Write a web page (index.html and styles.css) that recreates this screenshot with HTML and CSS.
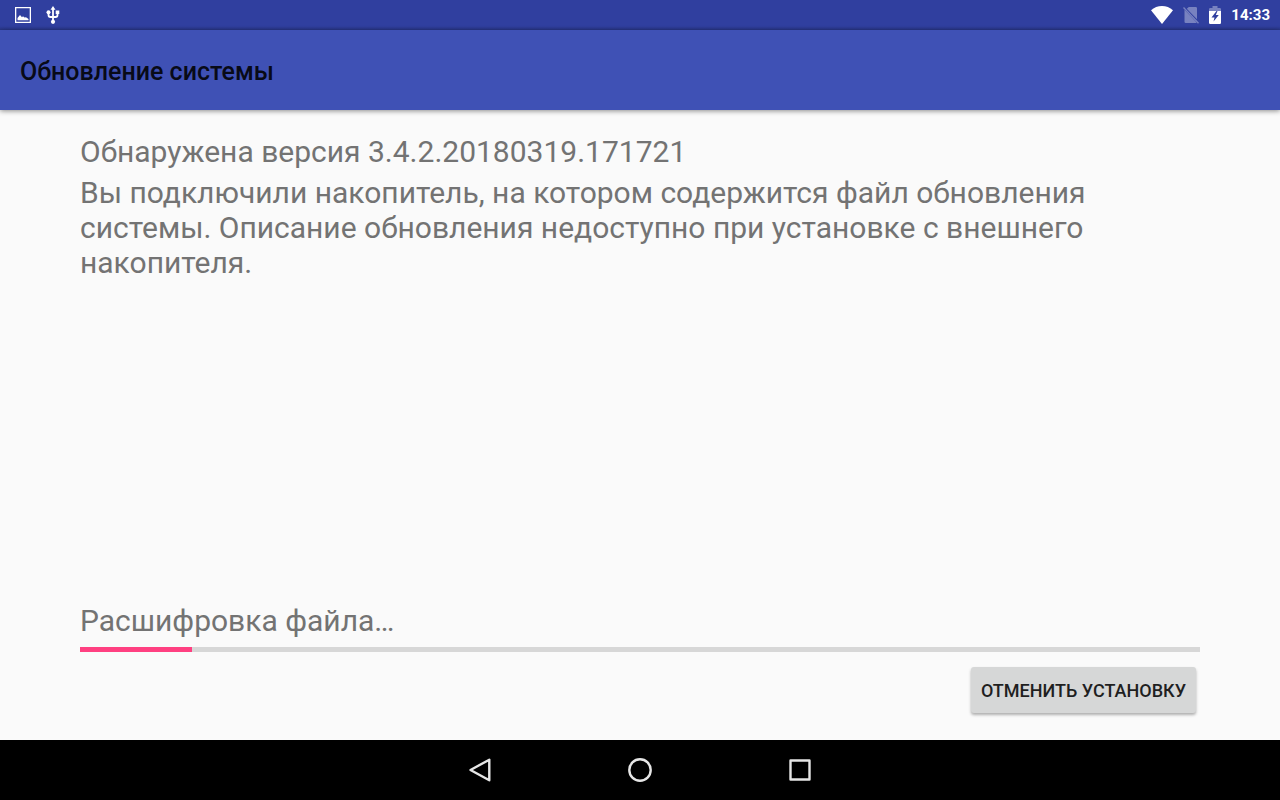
FILE: index.html
```html
<!DOCTYPE html>
<html lang="ru">
<head>
  <meta charset="UTF-8" />
  <meta name="viewport" content="width=device-width, initial-scale=1.0"/>
  <title>Обновление системы</title>
  <link rel="stylesheet" href="styles.css">
</head>
<body>
  <div class="status-bar">
    <div class="notifications">
      <!-- Screenshot -->
      <svg width="16" height="16" viewBox="0 0 16 16" fill="#fff">
        <path fill-rule="evenodd" d="M0 0H16V16H0ZM1.3 1.3V14.7H14.7V1.3Z"/>
        <path d="M2.5 13.3V11L5 8L7 10.3L8 9.3L9.5 10.5L11 10.2L13.5 12V13.3Z"/>
      </svg>
      <!-- USB -->
      <svg width="14" height="18" viewBox="0 0 14 18" fill="none" stroke="#fff" stroke-width="1.8">
        <path d="M7 3V15M2.5 6.5V9Q2.5 11 4.5 11H9.5Q11.5 11 11.5 9V6.500"/>
        <path d="M7 0L9.5 3.7H4.5ZM9.7 4.5H13.3V8H9.7Z" fill="#fff" stroke="none"/>
        <circle cx="2.5" cy="6.2" r="2" fill="#fff" stroke="none"/>
        <circle cx="7" cy="15.8" r="2.1" fill="#fff" stroke="none"/>
      </svg>
    </div>
    <div class="indicators">
      <svg width="22" height="18" viewBox="0 0 22 18" fill="#fff">
        <path d="M11 18L0 4.2C3 1.500 7 0 11 0S19 1.5 22 4.2Z"/>
      </svg>
      <!-- No SIM -->
      <svg class="no-sim" width="16" height="18" viewBox="0 0 16 18">
        <path d="M5.800 1H12.7Q14 1 14 2.3V13.300L3.800 2.800ZM1.500 3.800L13.700 16.600Q13.400 17 12.700 17H2.800Q1.500 17 1.500 15.700Z" fill="#fff"/>
        <path d="M0.500 1.500L15.500 17.300" stroke="#fff" stroke-width="1.300"/>
      </svg>
      <svg width="12" height="18" viewBox="0 0 12 18">
        <path d="M0 5V3.200Q0 2 1.2 2H3.5V0H8.5V2H10.800Q12 2 12 3.200V5Z" fill="#fff" opacity=".35"/>
        <path fill-rule="evenodd" d="M0 5H7.5L2.5 11.5H5.500L4.500 15.500L9.800 9H6.800L8.500 5H12V16.800Q12 18 10.800 18H1.2Q0 18 0 16.800Z" fill="#fff"/>
      </svg>
      <span class="clock">14:33</span>
    </div>
  </div>

  <header class="app-bar">
    <h1>Обновление системы</h1>
  </header>

  <main class="content">
    <p class="version">Обнаружена версия 3.4.2.20180319.171721</p>
    <p class="description">Вы подключили накопитель, на котором содержится файл обновления системы. Описание обновления недоступно при установке с внешнего накопителя.</p>

    <div class="install">
      <label for="install-progress">Расшифровка файла…</label>
      <progress id="install-progress" value="10" max="100"></progress>
      <button type="button" class="cancel">Отменить установку</button>
    </div>
  </main>

  <nav class="nav-bar">
    <button type="button" aria-label="Назад">
      <svg width="24" height="24" viewBox="0 0 24 24"><path d="M21.3 1.700V22.300L2.500 12Z"/></svg>
    </button>
    <button type="button" aria-label="Домой">
      <svg width="24" height="24" viewBox="0 0 24 24"><circle cx="12" cy="12" r="10.700"/></svg>
    </button>
    <button type="button" aria-label="Недавние">
      <svg width="24" height="24" viewBox="0 0 24 24"><rect x="2.5" y="2.5" width="19" height="19"/></svg>
    </button>
  </nav>
</body>
</html>
```
FILE: styles.css
```css
* {
  box-sizing: border-box;
}
body {
  margin: 0;
  min-height: 100vh;
  display: flex;
  flex-direction: column;
  font-family: Roboto, "Noto Sans", sans-serif;
  background-color: #fafafa;
  color: #737373;
}
h1, p {
  margin: 0;
}
svg {
  display: block;
}

/* Status bar */
.status-bar {
  display: flex;
  justify-content: space-between;
  height: 30px;
  padding: 0 10px 0 15px;
  background: linear-gradient(#303f9f 26px, #293789);
  color: #fff;
}
.notifications, .indicators {
  display: flex;
  align-items: center;
}
.notifications {
  gap: 15px;
}
.indicators {
  gap: 10px;
}
.no-sim {
  opacity: .35;
}
.clock {
  font-size: 15px;
  font-weight: 700;
}

/* Title */
.app-bar {
  display: flex;
  align-items: center;
  height: 80px;
  padding: 2px 20px 0;
  background-color: #3f51b5;
  box-shadow: 0 1px 5px rgba(0, 0, 0, .45);
}
.app-bar h1 {
  font-size: 25px;
  font-weight: 500;
  color: #080a17;
}

/* Update info */
.content {
  flex: 1;
  display: flex;
  flex-direction: column;
  padding: 24px 80px 27px;
  font-size: 30px;
  line-height: 35px;
}
.description {
  margin-top: 6px;
}
.install {
  display: flex;
  flex-direction: column;
  margin-top: auto;
}
progress {
  appearance: none;
  width: 100%;
  height: 5px;
  margin: 9px 0 15px;
  border: 0;
  background-color: #d7d7d7;
}
progress::-webkit-progress-bar {
  background-color: #d7d7d7;
}
progress::-webkit-progress-value {
  background-color: #ff4081;
}
.cancel {
  align-self: flex-end;
  height: 46px;
  margin-right: 4px;
  padding: 0 10px;
  border: 0;
  border-radius: 3px;
  background-color: #d6d7d7;
  box-shadow: 0 2px 3px rgba(0, 0, 0, .3);
  color: #1f1f1f;
  font-family: inherit;
  font-size: 18px;
  font-weight: 500;
  text-transform: uppercase;
}

/* Navigation bar */
.nav-bar {
  display: flex;
  justify-content: center;
  height: 60px;
  background-color: #000;
}
.nav-bar button {
  display: flex;
  align-items: center;
  justify-content: center;
  width: 160px;
  padding: 0;
  border: 0;
  background: none;
}
.nav-bar svg {
  fill: none;
  stroke: #e6e6e6;
  stroke-width: 2.4;
  stroke-linejoin: round;
}
```
